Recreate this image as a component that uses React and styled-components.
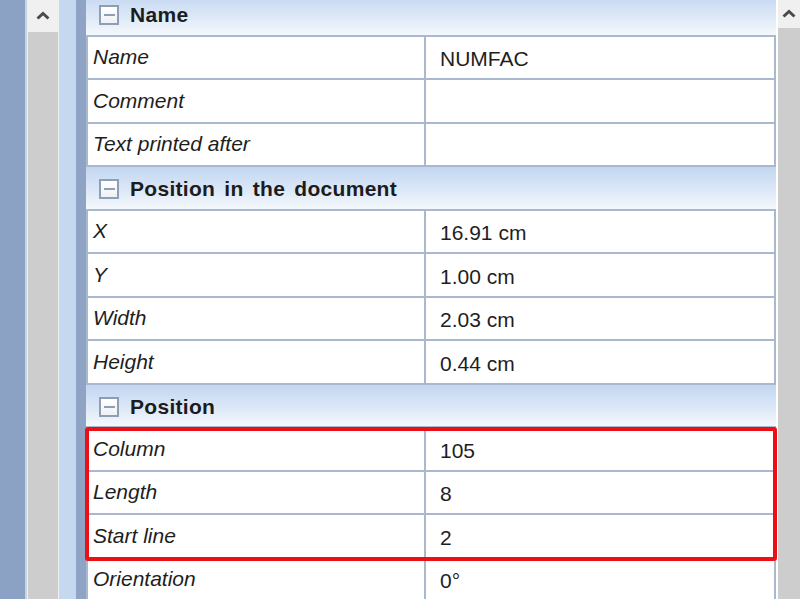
import React from 'react';
import styled, { createGlobalStyle } from 'styled-components';

const GlobalStyle = createGlobalStyle`
  html, body {
    margin: 0;
    padding: 0;
    background: #ffffff;
    overflow: hidden;
  }
  body {
    font-family: "Liberation Sans", Arial, sans-serif;
  }
  *, *::before, *::after {
    box-sizing: border-box;
  }
`;

const Page = styled.div`
  display: flex;
  width: 800px;
  height: 599px;
  overflow: hidden;
`;

const Sidebar = styled.div`
  width: 25px;
  flex: none;
  background: #8ba2c5;
`;

const ScrollBar = styled.div`
  width: ${props => props.width}px;
  flex: none;
  display: flex;
  flex-direction: column;
  background: #f0f0f0;
  border-left: ${props => props.edge}px solid ${props => props.edgeColor || '#e6e9ee'};
`;

const ArrowButton = styled.div`
  height: ${props => props.height}px;
  flex: none;
  display: flex;
  align-items: center;
  justify-content: center;
  padding-bottom: 2px;
`;

const Track = styled.div`
  flex: 1;
  background: #cdcdcd;
  margin: 0 ${props => props.inset}px;
`;

const Gutter = styled.div`
  width: ${props => props.width}px;
  flex: none;
  background: ${props => props.color};
`;

const Grid = styled.div`
  width: 690px;
  flex: none;
  display: flex;
  flex-direction: column;
  margin-top: -7px;
`;

const Spacer = styled.div`
  width: 2px;
  flex: none;
  background: #ffffff;
`;

const SectionHeader = styled.div`
  height: 43.5px;
  flex: none;
  display: flex;
  align-items: center;
  gap: 11px;
  padding: 3px 0 0 13px;
  background: linear-gradient(to bottom, #c2d6f1 0%, #dce8f7 55%, #f5f8fc 100%);
  border-bottom: 2px solid #a9b8cf;
`;

const ToggleBox = styled.div`
  width: 20px;
  height: 20px;
  border: 2px solid #8e9eb5;
  background: linear-gradient(to bottom, #ffffff, #eef1f5);
  display: flex;
  align-items: center;
  justify-content: center;

  &::before {
    content: '';
    width: 11px;
    height: 2px;
    background: #8e9eb5;
  }
`;

const SectionTitle = styled.span`
  font-weight: bold;
  font-size: 21px;
  letter-spacing: 0.3px;
  word-spacing: 3px;
  color: #1c1c1c;
`;

const Row = styled.div`
  height: 43.5px;
  flex: none;
  display: grid;
  grid-template-columns: 336px 1fr;
  border-left: 2px solid #a9b8cf;
  border-right: 2px solid #a9b8cf;
  border-bottom: 2px solid #a9b8cf;
  background: #ffffff;
`;

const Label = styled.div`
  display: flex;
  align-items: center;
  padding-left: 5px;
  font-style: italic;
  font-size: 21px;
  color: #1e1e1e;
`;

const Value = styled.div`
  display: flex;
  align-items: center;
  padding: 4px 0 0 14px;
  border-left: 2px solid #a9b8cf;
  font-size: 21px;
  color: #1e1e1e;
`;

const Highlight = styled.div`
  position: relative;
  display: flex;
  flex-direction: column;

  &::after {
    content: '';
    position: absolute;
    left: -1px;
    right: -1px;
    top: -1px;
    bottom: -2px;
    border: 4px solid #ec0f16;
    border-radius: 3px;
    pointer-events: none;
  }
`;

const Chevron = () => (
  <svg width="14" height="9" viewBox="0 0 14 9">
    <polyline points="1.5,7.5 7,2.5 12.5,7.5" fill="none" stroke="#4a4a4a" strokeWidth="3" strokeLinejoin="miter" />
  </svg>
);

const sections = [
  {
    title: 'Name',
    rows: [
      ['Name', 'NUMFAC'],
      ['Comment', ''],
      ['Text printed after', ''],
    ],
  },
  {
    title: 'Position in the document',
    rows: [
      ['X', '16.91 cm'],
      ['Y', '1.00 cm'],
      ['Width', '2.03 cm'],
      ['Height', '0.44 cm'],
    ],
  },
];

const positionRows = [
  ['Column', '105'],
  ['Length', '8'],
  ['Start line', '2'],
];

function PropRow({ label, value }) {
  return (
    <Row>
      <Label>{label}</Label>
      <Value>{value}</Value>
    </Row>
  );
}

export default function App() {
  return (
    <Page>
      <GlobalStyle />
      <Sidebar />
      <ScrollBar width={34} edge={2} edgeColor="#c9d3e2">
        <ArrowButton height={32}>
          <Chevron />
        </ArrowButton>
        <Track inset={1} />
      </ScrollBar>
      <Gutter width={17} color="#c6d8f0" />
      <Gutter width={10} color="#8fa4c4" />
      <Grid>
        {sections.map((section) => (
          <React.Fragment key={section.title}>
            <SectionHeader>
              <ToggleBox />
              <SectionTitle>{section.title}</SectionTitle>
            </SectionHeader>
            {section.rows.map(([label, value]) => (
              <PropRow key={label} label={label} value={value} />
            ))}
          </React.Fragment>
        ))}
        <SectionHeader>
          <ToggleBox />
          <SectionTitle>Position</SectionTitle>
        </SectionHeader>
        <Highlight>
          {positionRows.map(([label, value]) => (
            <PropRow key={label} label={label} value={value} />
          ))}
        </Highlight>
        <PropRow label="Orientation" value="0°" />
      </Grid>
      <Spacer />
      <ScrollBar width={22} edge={0}>
        <ArrowButton height={28}>
          <Chevron />
        </ArrowButton>
        <Track inset={0} />
      </ScrollBar>
    </Page>
  );
}
